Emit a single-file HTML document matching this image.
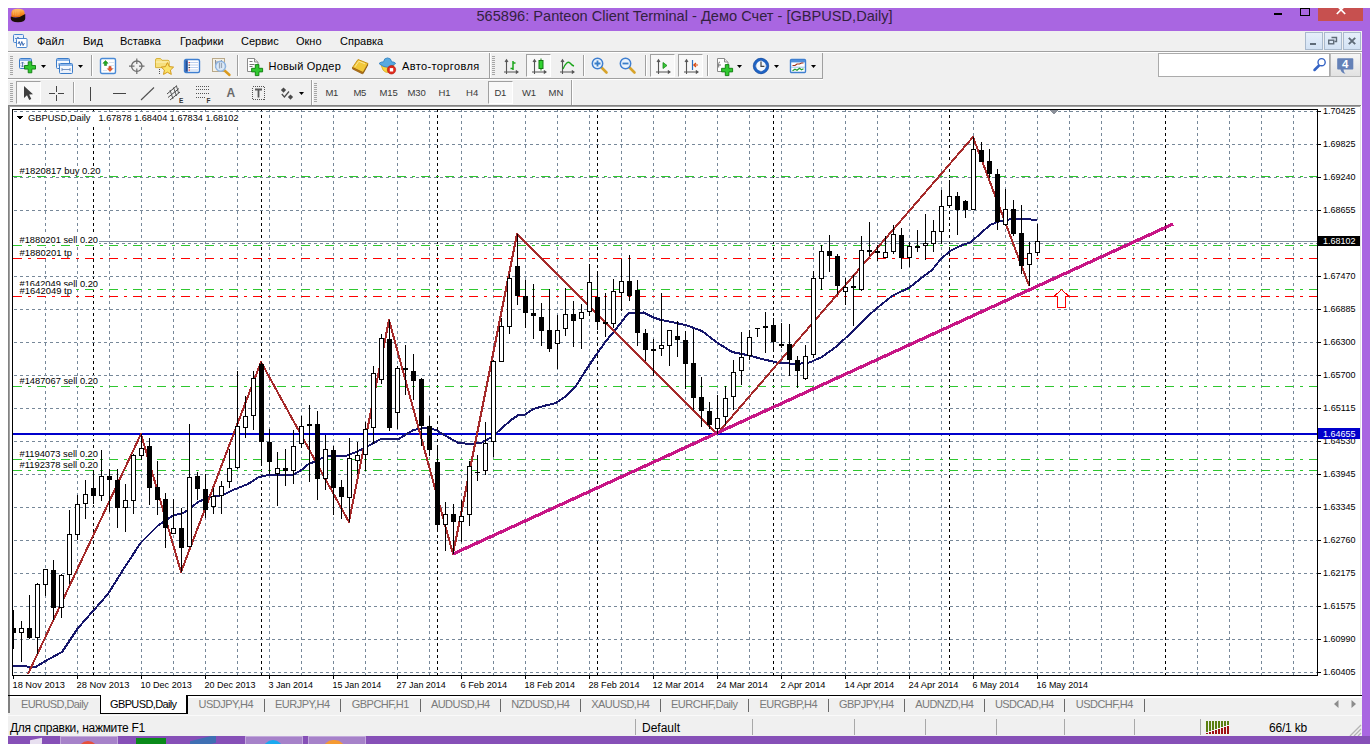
<!DOCTYPE html>
<html lang="ru">
<head>
<meta charset="utf-8">
<title>565896: Panteon Client Terminal - Демо Счет - [GBPUSD,Daily]</title>
<style>
html,body{margin:0;padding:0;background:#fff;}
body{width:1370px;height:744px;position:relative;overflow:hidden;font-family:"Liberation Sans",sans-serif;font-size:11px;color:#000;}
.abs{position:absolute;}
#win{position:absolute;left:8px;top:8px;width:1362px;height:728px;background:#a966e1;}
#title{position:absolute;left:0;top:0;width:1362px;height:23px;overflow:hidden;}
#title .cap{position:absolute;left:468.5px;top:-3px;font-size:14.6px;line-height:23px;color:#33213f;white-space:nowrap;letter-spacing:0px;}
#client{position:absolute;left:0;top:23px;width:1354px;height:705px;background:#f0f0f0;}
#menubar{position:absolute;left:0;top:0;width:1354px;height:20px;}
#menubar span{position:absolute;top:3px;line-height:14px;white-space:nowrap;}
.hline{position:absolute;height:1px;}
.vline{position:absolute;width:1px;}
.tbtxt{position:absolute;white-space:nowrap;}
.tf{position:absolute;top:62px;font-size:9.5px;line-height:12px;color:#3c3c3c;white-space:nowrap;}
.pressed{position:absolute;background:#f8f8f8;border:1px solid;border-color:#a0a0a0 #fff #fff #a0a0a0;box-sizing:border-box;}
svg{position:absolute;display:block;}
#tabs{position:absolute;left:0;top:664px;width:1354px;height:20px;}
#tabs span{position:absolute;top:3px;line-height:14px;color:#7a7a7a;white-space:nowrap;}
#tabs i{position:absolute;top:4px;width:1px;height:13px;background:#6a6a6a;}
#status{position:absolute;left:0;top:684px;width:1354px;height:21px;border-top:1px solid #fafafa;box-sizing:border-box;}
#status i{position:absolute;top:3px;width:1px;height:16px;background:#a8a8a8;}
#status span{position:absolute;top:2px;font-size:12px;line-height:16px;white-space:nowrap;}
#taskbar{position:absolute;left:8px;top:736px;width:1362px;height:8px;background:#8650b7;overflow:hidden;}
</style>
</head>
<body>
<div id="win">
 <div id="title">
  <svg style="left:2px;top:0px" width="16" height="15.5" viewBox="0 0 17 19" preserveAspectRatio="none"><defs><linearGradient id="go" x1="0" y1="0" x2="0" y2="1"><stop offset="0" stop-color="#ffc46a"/><stop offset="0.6" stop-color="#f58a1f"/><stop offset="1" stop-color="#e06a10"/></linearGradient></defs><path d="M1.5 11 v-5 q0 -5 7 -5 q7 0 7 5 v5 z" fill="url(#go)"/><path d="M0.8 10.5 q7.5 3.5 15.4 -3 v5.5 q0 4.5 -7.7 4.5 q-7.7 0 -7.7 -4.5 z" fill="#1a0e08"/><path d="M3.5 4 v5 M5.5 3 v6.5 M7.5 2.7 v7 M9.5 2.7 v6.5" stroke="#ffd9a0" stroke-width="0.7" opacity="0.7"/></svg>
  <div class="cap">565896: Panteon Client Terminal - Демо Счет - [GBPUSD,Daily]</div>
  <div class="abs" style="left:1266px;top:5px;width:8px;height:2px;background:#000"></div>
  <div class="abs" style="left:1292px;top:0px;width:8px;height:5.5px;border:1px solid #000"></div>
  <div class="abs" style="left:1310px;top:0;width:45px;height:13px;background:#c7504f"></div>
  <svg style="left:1328px;top:-3px" width="10" height="10" viewBox="0 0 10 10"><path d="M0.8 0.5 L9.2 9 M9.2 0.5 L0.8 9" stroke="#fff" stroke-width="1.7" fill="none"/></svg>
 </div>
 <div id="client">
  <div id="menubar">
   <svg style="left:4px;top:2px" width="17" height="16" viewBox="0 0 17 16" ><rect x="1.5" y="1.5" width="10" height="8" rx="1" fill="#e8f1fb" stroke="#4a86d0" stroke-width="1"/><path d="M3 5.5 h2 l1 -1.5 l1 2.5 l1 -1 h2" stroke="#3a70b8" stroke-width="0.8" fill="none"/><rect x="4.5" y="5.5" width="10.5" height="9" rx="1" fill="#fff" stroke="#4a86d0" stroke-width="1"/><path d="M6 11 l1.2 -2.5 l1.3 4 l1.3 -4 l1.3 4 l1.3 -2.5" stroke="#2a5fae" stroke-width="0.9" fill="none"/></svg>
   <span style="left:29px">Файл</span>
   <span style="left:75px">Вид</span>
   <span style="left:112px">Вставка</span>
   <span style="left:172px">Графики</span>
   <span style="left:233px">Сервис</span>
   <span style="left:288px">Окно</span>
   <span style="left:332px">Справка</span>
   <div class="abs" style="left:1297px;top:1px;width:18px;height:18px;background:linear-gradient(#e6effa,#d3e2f4);border:1px solid #a9b9cc;box-sizing:border-box"></div><svg style="left:1297px;top:1px" width="18" height="18" viewBox="0 0 18 18" ><rect x="5" y="11" width="6" height="2" fill="#5f6b78"/></svg><div class="abs" style="left:1316px;top:1px;width:18px;height:18px;background:linear-gradient(#e6effa,#d3e2f4);border:1px solid #a9b9cc;box-sizing:border-box"></div><svg style="left:1316px;top:1px" width="18" height="18" viewBox="0 0 18 18" ><path d="M7.5 5.5 h5 v4 h-2" stroke="#5f6b78" stroke-width="1.4" fill="none"/><rect x="4.7" y="8.2" width="5" height="3.6" stroke="#5f6b78" stroke-width="1.4" fill="none"/></svg><div class="abs" style="left:1335px;top:1px;width:18px;height:18px;background:linear-gradient(#e6effa,#d3e2f4);border:1px solid #a9b9cc;box-sizing:border-box"></div><svg style="left:1335px;top:1px" width="18" height="18" viewBox="0 0 18 18" ><path d="M5.8 5.8 l6.4 6.4 M12.2 5.8 l-6.4 6.4" stroke="#5f6b78" stroke-width="1.9"/></svg>
  </div>
  <!-- toolbar separators -->
  <div class="hline" style="left:0;top:20px;width:1354px;background:#a0a0a0"></div>
  <div class="hline" style="left:0;top:21px;width:1354px;background:#fff"></div>
  <div class="hline" style="left:0;top:47px;width:815px;background:#a0a0a0"></div>
  <div class="hline" style="left:0;top:48px;width:815px;background:#fff"></div>
  <div class="vline" style="left:814px;top:22px;height:26px;background:#a0a0a0"></div>
  <div class="vline" style="left:481px;top:22px;height:25px;background:#a0a0a0"></div>
  <div class="vline" style="left:482px;top:22px;height:25px;background:#fff"></div>
  <div class="vline" style="left:303px;top:49px;height:25px;background:#a0a0a0"></div>
  <div class="vline" style="left:304px;top:49px;height:25px;background:#fff"></div>
  <div class="vline" style="left:563px;top:49px;height:25px;background:#a0a0a0"></div>
  <div class="vline" style="left:564px;top:49px;height:25px;background:#fff"></div>
  <div class="abs" style="left:2px;top:25px;width:3px;height:19px;background:repeating-linear-gradient(to bottom,#a6a6a6 0,#a6a6a6 1px,transparent 1px,transparent 2px)"></div>
<svg style="left:10px;top:26px" width="20" height="18" viewBox="0 0 20 18" ><defs><linearGradient id="gw" x1="0" y1="0" x2="0" y2="1"><stop offset="0" stop-color="#fff"/><stop offset="1" stop-color="#e6eefa"/></linearGradient></defs><rect x="1.5" y="1.5" width="12" height="10" rx="1" fill="url(#gw)" stroke="#3b7cc9"/><rect x="2" y="2" width="11" height="2" fill="#8db6ea"/><path d="M4.5 5 v5 M3 6.5 l1.5 -1.5 l1.5 1.5 M3 8.5 l1.5 1.5 l1.5 -1.5" stroke="#5577aa" stroke-width="0.9" fill="none"/><path d="M10.2 4.8 h3.6 v3.7 h3.7 v3.6 h-3.7 v3.7 h-3.6 v-3.7 h-3.7 v-3.6 h3.7 z" fill="#30c830" stroke="#0d7a0d" stroke-width="0.9"/></svg>
<svg style="left:33px;top:34px" width="5" height="3" viewBox="0 0 5 3" ><path d="M0 0 H5 L2.5 3 Z" fill="#000"/></svg>
<svg style="left:47px;top:26px" width="20" height="18" viewBox="0 0 20 18" ><rect x="1.5" y="1.5" width="13" height="10" rx="1" fill="url(#gw)" stroke="#3b7cc9"/><rect x="2" y="2" width="12" height="2" fill="#8db6ea"/><path d="M4 7.5 h8 M4 6 v3 M12 6 v3" stroke="#6688bb" stroke-width="0.9" fill="none"/><rect x="4.5" y="6.5" width="13" height="10" rx="1" fill="url(#gw)" stroke="#3b7cc9"/><rect x="5" y="7" width="12" height="2" fill="#8db6ea"/><path d="M7 12.5 h8 M7 11 v3 M15 11 v3" stroke="#6688bb" stroke-width="0.9" fill="none"/></svg>
<svg style="left:70px;top:34px" width="5" height="3" viewBox="0 0 5 3" ><path d="M0 0 H5 L2.5 3 Z" fill="#000"/></svg>
<div class="vline" style="left:83px;top:24px;height:21px;background:#a0a0a0"></div><div class="vline" style="left:84px;top:24px;height:21px;background:#fff"></div>
<svg style="left:91px;top:26px" width="19" height="18" viewBox="0 0 19 18" ><rect x="1.5" y="1.5" width="15" height="15" rx="1.5" fill="#fff" stroke="#4a8ad6" stroke-width="1.4"/><path d="M10 5.5 h5 M10 8.5 h5 M10 11.5 h5 M4 13.5 h4" stroke="#d9e2ee" stroke-width="1"/><path d="M6.5 3.5 l2.6 2.8 h-1.5 v2.2 h-2.2 v-2.2 h-1.5 z" fill="#22aa22" stroke="#117711" stroke-width="0.5"/><path d="M11 14.5 l2.6 -2.8 h-1.5 v-2.2 h-2.2 v2.2 h-1.5 z" fill="#f05a28" stroke="#b03010" stroke-width="0.5"/></svg>
<svg style="left:120px;top:26px" width="18" height="18" viewBox="0 0 18 18" ><circle cx="8.8" cy="9.2" r="5.2" fill="none" stroke="#6d6d6d" stroke-width="1.3"/><path d="M8.8 1.5 v5.5 M8.8 11.5 v5.5 M1 9.2 h5.5 M11 9.2 h5.5" stroke="#6d6d6d" stroke-width="1.2"/></svg>
<svg style="left:146px;top:26px" width="21" height="19" viewBox="0 0 21 19" ><path d="M1.5 3 q0 -1.5 1.5 -1.5 h3.5 l1.5 1.8 h6 q1.2 0 1.2 1.3 v6 h-13.7 z" fill="#f6df7e" stroke="#d8b23a" stroke-width="1"/><path d="M1.8 5 h13" stroke="#fdf3c0" stroke-width="1"/><path d="M5.5 12 v6" stroke="#555" stroke-width="1" stroke-dasharray="1 1"/><path d="M13.4 5.6 l1.9 4 l4.3 .5 l-3.2 3 l.9 4.3 l-3.9 -2.2 l-3.9 2.2 l.9 -4.3 l-3.2 -3 l4.3 -.5 z" fill="#fbe36a" stroke="#d49a1c" stroke-width="1"/></svg>
<svg style="left:175px;top:27px" width="19" height="16" viewBox="0 0 19 16" ><rect x="1.5" y="1.5" width="15" height="13" rx="1.5" fill="#fff" stroke="#3f7fd0" stroke-width="1.4"/><rect x="2.2" y="2.2" width="2.6" height="11.6" fill="#1d4f9e"/><path d="M7 4.5 h8 M7 7 h8 M7 9.5 h8 M7 12 h8" stroke="#bcd0ee" stroke-width="1"/><rect x="5.6" y="4" width="1.2" height="1.2" fill="#e02020"/><rect x="5.6" y="6.5" width="1.2" height="1.2" fill="#222"/><rect x="5.6" y="9" width="1.2" height="1.2" fill="#222"/><rect x="5.6" y="11.5" width="1.2" height="1.2" fill="#e02020"/></svg>
<svg style="left:203px;top:26px" width="21" height="20" viewBox="0 0 21 20" ><rect x="1.5" y="1.5" width="12" height="13" fill="#f4f1e6" stroke="#b9a98a" stroke-width="1"/><path d="M4.5 3 v8 M10.5 3 v8 M4.5 5 h6" stroke="#8a8f98" stroke-width="1" fill="none"/><path d="M13 13 l5.5 5" stroke="#d99a1e" stroke-width="2.4" stroke-linecap="round"/><circle cx="9.6" cy="9.2" r="5" fill="#d6e8fa" fill-opacity="0.85" stroke="#8fb4e0" stroke-width="1.4"/><path d="M8.5 5.5 v6 M10.5 6 v5" stroke="#9aa6b5" stroke-width="1.2"/></svg>
<div class="vline" style="left:229px;top:24px;height:21px;background:#a0a0a0"></div><div class="vline" style="left:230px;top:24px;height:21px;background:#fff"></div>
<svg style="left:238px;top:26px" width="19" height="20" viewBox="0 0 19 20" ><path d="M1.5 1.5 h7 l3.5 3.5 v9.5 h-10.5 z" fill="#fff" stroke="#8a8a8a" stroke-width="1"/><path d="M8.5 1.5 v3.5 h3.5" fill="#e6e6e6" stroke="#8a8a8a" stroke-width="1"/><path d="M3.5 4.5 h3 M3.5 7.5 h5 M3.5 9.5 h3" stroke="#777" stroke-width="1"/><path d="M9.3 7.6 h3.6 v3.7 h3.7 v3.6 h-3.7 v3.7 h-3.6 v-3.7 h-3.7 v-3.6 h3.7 z" fill="#30c830" stroke="#0d7a0d" stroke-width="0.9"/></svg>
<span class="tbtxt" style="left:260.50px;top:28.19px;font-size:11px;line-height:14px;color:#000;letter-spacing:0.219px;">Новый Ордер</span>
<svg style="left:343px;top:27px" width="19" height="17" viewBox="0 0 19 17" ><path d="M1.5 9.5 L7 1.5 L17 5.5 L12 14.5 Z" fill="#f2c83a" stroke="#c8931a" stroke-width="1"/><path d="M1.5 9.5 L12 14.5 L11.5 16 L1.5 11 Z" fill="#b87414" stroke="#8a560c" stroke-width="0.6"/><path d="M12 14.5 L17 5.5 L17.2 7 L12.3 16 Z" fill="#8a560c"/><path d="M4 8.8 L7.8 3.3 L14 5.8" stroke="#fbe89a" stroke-width="1" fill="none"/></svg>
<svg style="left:370px;top:26px" width="19" height="18" viewBox="0 0 19 18" ><path d="M3 8 q6.5 5 13 0 l-2 5 q-4.5 5 -9 0 z" fill="#f7d544" stroke="#d6a91e" stroke-width="0.8"/><path d="M1 6.5 q2 -2 4.5 -1.6 q.5 -4 4 -4 q3.6 0 4.2 4 q2.6 -.4 4 1.6 q-4 3.6 -8.3 3.6 q-4.6 0 -8.4 -3.6 z" fill="#58a9df" stroke="#2f7fc0" stroke-width="0.8"/><circle cx="13.5" cy="12.8" r="4.2" fill="#e02a1c" stroke="#b01208" stroke-width="0.6"/><rect x="11.8" y="11.1" width="3.4" height="3.4" fill="#fff"/></svg>
<span class="tbtxt" style="left:394.00px;top:28.19px;font-size:11px;line-height:14px;color:#000;letter-spacing:0.374px;">Авто-торговля</span>
<div class="abs" style="left:484px;top:25px;width:3px;height:19px;background:repeating-linear-gradient(to bottom,#a6a6a6 0,#a6a6a6 1px,transparent 1px,transparent 2px)"></div>
<svg style="left:495px;top:27px" width="17" height="17" viewBox="0 0 17 17" ><path d="M3.5 2 v14 M1 14 h13.5 M2 4 l1.5 -2.2 l1.5 2.2 M12.8 12.5 l2.2 1.5 l-2.2 1.5" stroke="#555" stroke-width="1.1" fill="none"/><path d="M10 3 v9 M10 5 h2.5 M7.5 10.5 h2.5" stroke="#1aa51a" stroke-width="1.5" fill="none"/></svg>
<div class="pressed" style="left:518px;top:23px;width:25px;height:23px"></div>
<svg style="left:523px;top:27px" width="17" height="17" viewBox="0 0 17 17" ><path d="M3.5 2 v14 M1 14 h13.5 M2 4 l1.5 -2.2 l1.5 2.2 M12.8 12.5 l2.2 1.5 l-2.2 1.5" stroke="#555" stroke-width="1.1" fill="none"/><path d="M10 0.5 v12" stroke="#127a12" stroke-width="1"/><rect x="8" y="2.5" width="4" height="8" fill="#2fd22f" stroke="#127a12" stroke-width="1"/></svg>
<svg style="left:551px;top:27px" width="17" height="17" viewBox="0 0 17 17" ><path d="M3.5 2 v14 M1 14 h13.5 M2 4 l1.5 -2.2 l1.5 2.2 M12.8 12.5 l2.2 1.5 l-2.2 1.5" stroke="#555" stroke-width="1.1" fill="none"/><path d="M4 11 q4 -9 7 -6 q2 2.5 4 3" stroke="#1aa51a" stroke-width="1.3" fill="none"/></svg>
<div class="vline" style="left:575px;top:24px;height:21px;background:#a0a0a0"></div><div class="vline" style="left:576px;top:24px;height:21px;background:#fff"></div>
<svg style="left:583px;top:26px" width="18" height="18" viewBox="0 0 18 18" ><path d="M10.5 10.5 l5 5" stroke="#d7a32a" stroke-width="2.6" stroke-linecap="round"/><circle cx="6.5" cy="6.5" r="5.2" fill="#eaf3fc" stroke="#3f7fd0" stroke-width="1.5"/><path d="M3.5 6.5 h6 M6.5 3.5 v6" stroke="#3a7ec8" stroke-width="1.8"/></svg>
<svg style="left:611px;top:26px" width="18" height="18" viewBox="0 0 18 18" ><path d="M10.5 10.5 l5 5" stroke="#d7a32a" stroke-width="2.6" stroke-linecap="round"/><circle cx="6.5" cy="6.5" r="5.2" fill="#eaf3fc" stroke="#3f7fd0" stroke-width="1.5"/><path d="M3.5 6.5 h6" stroke="#3a7ec8" stroke-width="1.8"/></svg>
<div class="vline" style="left:637px;top:24px;height:21px;background:#a0a0a0"></div><div class="vline" style="left:638px;top:24px;height:21px;background:#fff"></div>
<div class="pressed" style="left:642px;top:23px;width:25px;height:23px"></div>
<svg style="left:647px;top:27px" width="17" height="17" viewBox="0 0 17 17" ><path d="M3.5 2 v14 M1 14 h13.5 M2 4 l1.5 -2.2 l1.5 2.2 M12.8 12.5 l2.2 1.5 l-2.2 1.5" stroke="#555" stroke-width="1.1" fill="none"/><path d="M8 4.5 l4 3 l-4 3 z" fill="#39c839" stroke="#168a16" stroke-width="0.8"/></svg>
<div class="pressed" style="left:670px;top:23px;width:25px;height:23px"></div>
<svg style="left:675px;top:27px" width="17" height="17" viewBox="0 0 17 17" ><path d="M3.5 2 v14 M1 14 h13.5 M2 4 l1.5 -2.2 l1.5 2.2 M12.8 12.5 l2.2 1.5 l-2.2 1.5" stroke="#555" stroke-width="1.1" fill="none"/><path d="M9.5 2 v10" stroke="#2a6fc0" stroke-width="1.2"/><path d="M15 7 h-4 M13 5 l-2.2 2 l2.2 2" stroke="#d84a10" stroke-width="1.2" fill="none"/></svg>
<div class="vline" style="left:699px;top:24px;height:21px;background:#a0a0a0"></div><div class="vline" style="left:700px;top:24px;height:21px;background:#fff"></div>
<svg style="left:708px;top:26px" width="19" height="20" viewBox="0 0 19 20" ><path d="M1.5 1.5 h7 l3.5 3.5 v9.5 h-10.5 z" fill="#fff" stroke="#8a8a8a" stroke-width="1"/><path d="M8.5 1.5 v3.5 h3.5" fill="#e6e6e6" stroke="#8a8a8a" stroke-width="1"/><path d="M4 5 q-1.3 0 -1.3 1.5 v4" stroke="#777" stroke-width="1" fill="none"/><path d="M2 8 h3" stroke="#777" stroke-width="1"/><path d="M9.3 7.6 h3.6 v3.7 h3.7 v3.6 h-3.7 v3.7 h-3.6 v-3.7 h-3.7 v-3.6 h3.7 z" fill="#30c830" stroke="#0d7a0d" stroke-width="0.9"/></svg>
<svg style="left:729px;top:34px" width="5" height="3" viewBox="0 0 5 3" ><path d="M0 0 H5 L2.5 3 Z" fill="#000"/></svg>
<svg style="left:744px;top:26px" width="18" height="18" viewBox="0 0 18 18" ><circle cx="9" cy="9" r="6.4" fill="#f4f8fd" stroke="#1f63c4" stroke-width="3"/><circle cx="9" cy="9" r="7.8" fill="none" stroke="#0c3f8f" stroke-width="0.5"/><path d="M9 4.5 v4.8 h3.4" stroke="#444" stroke-width="1.2" fill="none"/><path d="M9 3 v1 M9 14 v1 M3 9 h1 M14 9 h1" stroke="#99a" stroke-width="1"/></svg>
<svg style="left:766px;top:34px" width="5" height="3" viewBox="0 0 5 3" ><path d="M0 0 H5 L2.5 3 Z" fill="#000"/></svg>
<svg style="left:781px;top:27px" width="19" height="16" viewBox="0 0 19 16" ><rect x="1.5" y="1.5" width="15" height="13" rx="1" fill="#fff" stroke="#3f7fd0" stroke-width="1.4"/><rect x="2" y="2" width="14" height="2.4" fill="#4f8fdc"/><path d="M2 9.2 h14" stroke="#9fc0ea" stroke-width="1"/><path d="M3.5 7.5 h2.5 l2 -1.5 h2.5 l2 -1 h2" stroke="#a03018" stroke-width="1.2" fill="none"/><path d="M3.5 12.8 l2.5 -1.5 l2 1 l2.5 -2 l2 1.5 l2 -1" stroke="#1f9a2f" stroke-width="1.2" fill="none"/></svg>
<svg style="left:803px;top:34px" width="5" height="3" viewBox="0 0 5 3" ><path d="M0 0 H5 L2.5 3 Z" fill="#000"/></svg>
<div class="abs" style="left:1150px;top:22px;width:172px;height:24px;background:#fff;border:1px solid #ababab;box-sizing:border-box"></div>
<svg style="left:1304px;top:26px" width="14" height="15" viewBox="0 0 14 15" ><path d="M7 8.5 l-4.5 4.5" stroke="#3563c4" stroke-width="2.5" stroke-linecap="round"/><circle cx="9.6" cy="5.2" r="3.6" fill="#fff" stroke="#3563c4" stroke-width="1.4"/></svg>
<div class="abs" style="left:1322px;top:22px;width:31px;height:24px;background:linear-gradient(#f6f6f6,#e2e2e2);border:1px solid #b9b9b9;box-sizing:border-box"></div>
<svg style="left:1329px;top:27px" width="17" height="16" viewBox="0 0 17 16" ><path d="M1 0.2 h14.5 q.8 0 .8 .8 v9.7 q0 .8 -.8 .8 h-9 q0 3 2 4.2 q-4.5 -.6 -5 -4.2 h-2.5 q-.8 0 -.8 -.8 v-9.7 q0 -.8 .8 -.8 z" fill="#6481b7"/><text x="8.2" y="10" text-anchor="middle" font-family="Liberation Sans, sans-serif" font-weight="bold" font-size="11.5" fill="#fff" shape-rendering="auto">4</text></svg>
  <div class="abs" style="left:2px;top:52px;width:3px;height:19px;background:repeating-linear-gradient(to bottom,#a6a6a6 0,#a6a6a6 1px,transparent 1px,transparent 2px)"></div>
<div class="pressed" style="left:8px;top:50px;width:25px;height:23px"></div>
<svg style="left:15px;top:54px" width="11" height="16" viewBox="0 0 11 16" ><path d="M1 1 L1 13 L4 10.2 L6.2 15 L8.3 14 L6.2 9.5 L10 9.2 Z" fill="#3f3f3f"/></svg>
<svg style="left:40px;top:54px" width="17" height="17" viewBox="0 0 17 17" ><path d="M8.5 1 v6 M8.5 10 v6 M1 8.5 h6 M10 8.5 h6" stroke="#454545" stroke-width="1" shape-rendering="crispEdges"/></svg>
<div class="vline" style="left:65px;top:51px;height:21px;background:#a0a0a0"></div><div class="vline" style="left:66px;top:51px;height:21px;background:#fff"></div>
<svg style="left:82px;top:56px" width="1" height="14" viewBox="0 0 1 14" ><rect width="1" height="14" fill="#454545"/></svg>
<svg style="left:105px;top:62px" width="13" height="1" viewBox="0 0 13 1" ><rect width="13" height="1" fill="#454545"/></svg>
<svg style="left:132px;top:55px" width="15" height="15" viewBox="0 0 15 15" ><path d="M1 14 L14 1.5" stroke="#505050" stroke-width="1.1"/></svg>
<svg style="left:158px;top:53px" width="18" height="19" viewBox="0 0 18 19" ><path d="M1 10 L11 1.5 M2 13.5 L13 4.5 M4 16 L14 8" stroke="#4a4a4a" stroke-width="1"/><path d="M4 6 L7 15 M7.5 3.5 L10.5 12 M10.5 2 L12.5 9" stroke="#4a4a4a" stroke-width="0.9"/><text x="13" y="18.5" font-family="Liberation Sans, sans-serif" font-weight="bold" font-size="6.5" fill="#333">E</text></svg>
<svg style="left:187px;top:54px" width="17" height="18" viewBox="0 0 17 18" ><path d="M1 1.5 h13 M1 4 h13 M1 8 h13 M1 12.5 h10" stroke="#555" stroke-width="1" stroke-dasharray="1 1" shape-rendering="crispEdges"/><text x="11.5" y="17.5" font-family="Liberation Sans, sans-serif" font-weight="bold" font-size="6.5" fill="#333">F</text></svg>
<span class="tbtxt" style="left:218.50px;top:55.34px;font-size:12px;line-height:15px;color:#6a6a6a;font-weight:bold;letter-spacing:-0.466px;">A</span>
<svg style="left:243px;top:54px" width="16" height="16" viewBox="0 0 16 16" ><rect x="1.5" y="1.5" width="12" height="13" fill="none" stroke="#555" stroke-width="1" stroke-dasharray="1 1" shape-rendering="crispEdges"/><path d="M4 4.5 h7 M7.5 4.5 v8" stroke="#5a5a5a" stroke-width="1.8"/></svg>
<svg style="left:271px;top:55px" width="16" height="16" viewBox="0 0 16 16" ><path d="M4.5 1.5 l2.6 2.6 l-2.6 2.6 l-2.6 -2.6 z" fill="#4a4a4a"/><path d="M11.5 8.5 l2.6 2.6 l-2.6 2.6 l-2.6 -2.6 z" fill="#4a4a4a"/><path d="M2.8 8 l2.6 3 l4.6 -5.5" stroke="#4a4a4a" stroke-width="1.2" fill="none"/></svg>
<svg style="left:291px;top:61px" width="5" height="3" viewBox="0 0 5 3" ><path d="M0 0 H5 L2.5 3 Z" fill="#000"/></svg>
<div class="abs" style="left:306px;top:52px;width:3px;height:19px;background:repeating-linear-gradient(to bottom,#a6a6a6 0,#a6a6a6 1px,transparent 1px,transparent 2px)"></div>
<span class="tbtxt" style="left:317.50px;top:56.46px;font-size:9.5px;line-height:12.5px;color:#3a3a3a;letter-spacing:-0.349px;">M1</span>
<span class="tbtxt" style="left:345.50px;top:56.46px;font-size:9.5px;line-height:12.5px;color:#3a3a3a;letter-spacing:-0.349px;">M5</span>
<span class="tbtxt" style="left:371.50px;top:56.46px;font-size:9.5px;line-height:12.5px;color:#3a3a3a;letter-spacing:-0.160px;">M15</span>
<span class="tbtxt" style="left:399.50px;top:56.46px;font-size:9.5px;line-height:12.5px;color:#3a3a3a;letter-spacing:-0.160px;">M30</span>
<span class="tbtxt" style="left:430.50px;top:56.46px;font-size:9.5px;line-height:12.5px;color:#3a3a3a;letter-spacing:-0.072px;">H1</span>
<span class="tbtxt" style="left:458.00px;top:56.46px;font-size:9.5px;line-height:12.5px;color:#3a3a3a;letter-spacing:0.178px;">H4</span>
<div class="pressed" style="left:480px;top:50px;width:25px;height:23px"></div>
<span class="tbtxt" style="left:486.50px;top:56.46px;font-size:9.5px;line-height:12.5px;color:#3a3a3a;letter-spacing:-0.322px;">D1</span>
<span class="tbtxt" style="left:514.00px;top:56.46px;font-size:9.5px;line-height:12.5px;color:#3a3a3a;letter-spacing:-0.125px;">W1</span>
<span class="tbtxt" style="left:540.50px;top:56.46px;font-size:9.5px;line-height:12.5px;color:#3a3a3a;letter-spacing:0.113px;">MN</span>
  <!-- chart frame -->
  <div class="abs" style="left:0;top:74px;width:1354px;height:590px;background:#fff;"></div>
  <div class="hline" style="left:0;top:74px;width:1354px;background:#828282"></div>
  <div class="hline" style="left:0;top:75px;width:1354px;background:#a0a0a0"></div>
  <div class="vline" style="left:0;top:74px;height:590px;background:#828282"></div>
  <div class="vline" style="left:1px;top:75px;height:589px;background:#a0a0a0"></div>
  <div class="vline" style="left:1352px;top:75px;height:589px;background:#e3e3e3"></div>
  <div class="vline" style="left:1353px;top:74px;height:590px;background:#fff"></div>
  <svg class="chart" style="left:0px;top:74px" width="1354" height="590" viewBox="8 105 1354 590" shape-rendering="crispEdges">
<line x1="45.5" y1="109" x2="45.5" y2="675" stroke="#778899" stroke-dasharray="3 3"/>
<line x1="77.5" y1="109" x2="77.5" y2="675" stroke="#778899" stroke-dasharray="3 3"/>
<line x1="109.5" y1="109" x2="109.5" y2="675" stroke="#778899" stroke-dasharray="3 3"/>
<line x1="141.5" y1="109" x2="141.5" y2="675" stroke="#778899" stroke-dasharray="3 3"/>
<line x1="173.5" y1="109" x2="173.5" y2="675" stroke="#778899" stroke-dasharray="3 3"/>
<line x1="205.5" y1="109" x2="205.5" y2="675" stroke="#778899" stroke-dasharray="3 3"/>
<line x1="237.5" y1="109" x2="237.5" y2="675" stroke="#778899" stroke-dasharray="3 3"/>
<line x1="269.5" y1="109" x2="269.5" y2="675" stroke="#778899" stroke-dasharray="3 3"/>
<line x1="301.5" y1="109" x2="301.5" y2="675" stroke="#778899" stroke-dasharray="3 3"/>
<line x1="333.5" y1="109" x2="333.5" y2="675" stroke="#778899" stroke-dasharray="3 3"/>
<line x1="365.5" y1="109" x2="365.5" y2="675" stroke="#778899" stroke-dasharray="3 3"/>
<line x1="397.5" y1="109" x2="397.5" y2="675" stroke="#778899" stroke-dasharray="3 3"/>
<line x1="429.5" y1="109" x2="429.5" y2="675" stroke="#778899" stroke-dasharray="3 3"/>
<line x1="461.5" y1="109" x2="461.5" y2="675" stroke="#778899" stroke-dasharray="3 3"/>
<line x1="493.5" y1="109" x2="493.5" y2="675" stroke="#778899" stroke-dasharray="3 3"/>
<line x1="525.5" y1="109" x2="525.5" y2="675" stroke="#778899" stroke-dasharray="3 3"/>
<line x1="557.5" y1="109" x2="557.5" y2="675" stroke="#778899" stroke-dasharray="3 3"/>
<line x1="589.5" y1="109" x2="589.5" y2="675" stroke="#778899" stroke-dasharray="3 3"/>
<line x1="621.5" y1="109" x2="621.5" y2="675" stroke="#778899" stroke-dasharray="3 3"/>
<line x1="653.5" y1="109" x2="653.5" y2="675" stroke="#778899" stroke-dasharray="3 3"/>
<line x1="685.5" y1="109" x2="685.5" y2="675" stroke="#778899" stroke-dasharray="3 3"/>
<line x1="717.5" y1="109" x2="717.5" y2="675" stroke="#778899" stroke-dasharray="3 3"/>
<line x1="749.5" y1="109" x2="749.5" y2="675" stroke="#778899" stroke-dasharray="3 3"/>
<line x1="781.5" y1="109" x2="781.5" y2="675" stroke="#778899" stroke-dasharray="3 3"/>
<line x1="813.5" y1="109" x2="813.5" y2="675" stroke="#778899" stroke-dasharray="3 3"/>
<line x1="845.5" y1="109" x2="845.5" y2="675" stroke="#778899" stroke-dasharray="3 3"/>
<line x1="877.5" y1="109" x2="877.5" y2="675" stroke="#778899" stroke-dasharray="3 3"/>
<line x1="909.5" y1="109" x2="909.5" y2="675" stroke="#778899" stroke-dasharray="3 3"/>
<line x1="941.5" y1="109" x2="941.5" y2="675" stroke="#778899" stroke-dasharray="3 3"/>
<line x1="973.5" y1="109" x2="973.5" y2="675" stroke="#778899" stroke-dasharray="3 3"/>
<line x1="1005.5" y1="109" x2="1005.5" y2="675" stroke="#778899" stroke-dasharray="3 3"/>
<line x1="1037.5" y1="109" x2="1037.5" y2="675" stroke="#778899" stroke-dasharray="3 3"/>
<line x1="1069.5" y1="109" x2="1069.5" y2="675" stroke="#778899" stroke-dasharray="3 3"/>
<line x1="1101.5" y1="109" x2="1101.5" y2="675" stroke="#778899" stroke-dasharray="3 3"/>
<line x1="1133.5" y1="109" x2="1133.5" y2="675" stroke="#778899" stroke-dasharray="3 3"/>
<line x1="1165.5" y1="109" x2="1165.5" y2="675" stroke="#778899" stroke-dasharray="3 3"/>
<line x1="1197.5" y1="109" x2="1197.5" y2="675" stroke="#778899" stroke-dasharray="3 3"/>
<line x1="1229.5" y1="109" x2="1229.5" y2="675" stroke="#778899" stroke-dasharray="3 3"/>
<line x1="1261.5" y1="109" x2="1261.5" y2="675" stroke="#778899" stroke-dasharray="3 3"/>
<line x1="1293.5" y1="109" x2="1293.5" y2="675" stroke="#778899" stroke-dasharray="3 3"/>
<line x1="93.5" y1="109" x2="93.5" y2="675" stroke="#000" stroke-dasharray="3 3"/>
<line x1="261.5" y1="109" x2="261.5" y2="675" stroke="#000" stroke-dasharray="3 3"/>
<line x1="437.5" y1="109" x2="437.5" y2="675" stroke="#000" stroke-dasharray="3 3"/>
<line x1="597.5" y1="109" x2="597.5" y2="675" stroke="#000" stroke-dasharray="3 3"/>
<line x1="773.5" y1="109" x2="773.5" y2="675" stroke="#000" stroke-dasharray="3 3"/>
<line x1="949.5" y1="109" x2="949.5" y2="675" stroke="#000" stroke-dasharray="3 3"/>
<line x1="1165.5" y1="109" x2="1165.5" y2="675" stroke="#000" stroke-dasharray="3 3"/>
<line x1="14" y1="111.5" x2="1317" y2="111.5" stroke="#778899" stroke-dasharray="3 3"/>
<line x1="14" y1="144.5" x2="1317" y2="144.5" stroke="#778899" stroke-dasharray="3 3"/>
<line x1="14" y1="177.5" x2="1317" y2="177.5" stroke="#778899" stroke-dasharray="3 3"/>
<line x1="14" y1="210.5" x2="1317" y2="210.5" stroke="#778899" stroke-dasharray="3 3"/>
<line x1="14" y1="243.5" x2="1317" y2="243.5" stroke="#778899" stroke-dasharray="3 3"/>
<line x1="14" y1="276.5" x2="1317" y2="276.5" stroke="#778899" stroke-dasharray="3 3"/>
<line x1="14" y1="309.5" x2="1317" y2="309.5" stroke="#778899" stroke-dasharray="3 3"/>
<line x1="14" y1="342.5" x2="1317" y2="342.5" stroke="#778899" stroke-dasharray="3 3"/>
<line x1="14" y1="375.5" x2="1317" y2="375.5" stroke="#778899" stroke-dasharray="3 3"/>
<line x1="14" y1="408.5" x2="1317" y2="408.5" stroke="#778899" stroke-dasharray="3 3"/>
<line x1="14" y1="441.5" x2="1317" y2="441.5" stroke="#778899" stroke-dasharray="3 3"/>
<line x1="14" y1="474.5" x2="1317" y2="474.5" stroke="#778899" stroke-dasharray="3 3"/>
<line x1="14" y1="507.5" x2="1317" y2="507.5" stroke="#778899" stroke-dasharray="3 3"/>
<line x1="14" y1="540.5" x2="1317" y2="540.5" stroke="#778899" stroke-dasharray="3 3"/>
<line x1="14" y1="573.5" x2="1317" y2="573.5" stroke="#778899" stroke-dasharray="3 3"/>
<line x1="14" y1="606.5" x2="1317" y2="606.5" stroke="#778899" stroke-dasharray="3 3"/>
<line x1="14" y1="639.5" x2="1317" y2="639.5" stroke="#778899" stroke-dasharray="3 3"/>
<line x1="14" y1="672.5" x2="1317" y2="672.5" stroke="#778899" stroke-dasharray="3 3"/>
<line x1="13" y1="241.5" x2="1317" y2="241.5" stroke="#8492a2"/>
<line x1="13" y1="176.5" x2="1317" y2="176.5" stroke="#2fc72f" stroke-dasharray="9 6 3 6" stroke-dashoffset="0"/>
<line x1="13" y1="245.5" x2="1317" y2="245.5" stroke="#2fc72f" stroke-dasharray="9 6 3 6" stroke-dashoffset="0"/>
<line x1="13" y1="289.5" x2="1317" y2="289.5" stroke="#2fc72f" stroke-dasharray="9 6 3 6" stroke-dashoffset="0"/>
<line x1="13" y1="386.5" x2="1317" y2="386.5" stroke="#2fc72f" stroke-dasharray="9 6 3 6" stroke-dashoffset="0"/>
<line x1="13" y1="459.5" x2="1317" y2="459.5" stroke="#2fc72f" stroke-dasharray="9 6 3 6" stroke-dashoffset="0"/>
<line x1="13" y1="470.5" x2="1317" y2="470.5" stroke="#2fc72f" stroke-dasharray="9 6 3 6" stroke-dashoffset="0"/>
<line x1="13" y1="258.5" x2="1317" y2="258.5" stroke="#ff0000" stroke-dasharray="9 6 3 6" stroke-dashoffset="0"/>
<line x1="13" y1="296.5" x2="1317" y2="296.5" stroke="#ff0000" stroke-dasharray="9 6 3 6" stroke-dashoffset="0"/>
<rect x="13" y="433" width="1304" height="2" fill="#0000cc"/>
<polyline fill="none" stroke="#16166b" stroke-width="2" stroke-linejoin="round" points="13,665.7 35.5,667 45.5,661 62,652 78,628 93,611 108,594 123,570 140.5,543 158,525.5 173,515.5 183,513 188,510 198,502 208,497.5 223,495 233,490 248,484 258,477.5 268,475 283,475.5 293,475 303,469 308,464.5 316,461 324,457 327,456.5 346,456 356,452 364.5,448 381,439 398.5,439 413.5,430 426,427.5 436,430 446,436 458.5,443 471,444 481,443 491,437.5 501,429 511,420 518.5,415 525,414.5 533.5,409 543.5,406 556,403 566,396 576,386 586,370 596,355 606,341 616,329 628.5,313 643.5,312.5 653.5,317.5 661,320 672,322 687,325.5 702,331 717,342.5 732,352 747,355 762,359 777,362.5 797,364 809.5,362.5 822,357 837,346 852,332 867,317 877,308 892,296 909.5,287.5 922,277.5 932,270 940,260 950,251 960,246 970,242.5 980,234 990,225 1000,221 1012.5,219 1025,219 1037,220"/>
<polyline fill="none" stroke="#a52a2a" stroke-width="2" stroke-linejoin="round" points="28,674 141,434 181,572 261,362 349,522 389,320 453,554 517,234 717,434 973,137 1029,285.5"/>
<line x1="453" y1="554" x2="1173" y2="224" stroke="#c71585" stroke-width="3.2"/>
<rect x="13" y="610" width="1" height="39" fill="#000"/>
<rect x="13" y="628" width="3" height="5" fill="#000"/>
<rect x="21" y="621" width="1" height="41" fill="#000"/>
<rect x="19.5" y="628.5" width="4" height="4" fill="#fff" stroke="#000"/>
<rect x="29" y="595" width="1" height="44" fill="#000"/>
<rect x="27" y="628" width="5" height="10" fill="#000"/>
<rect x="37" y="583" width="1" height="71" fill="#000"/>
<rect x="35.5" y="584.5" width="4" height="53" fill="#fff" stroke="#000"/>
<rect x="45" y="569" width="1" height="27" fill="#000"/>
<rect x="43.5" y="569.5" width="4" height="15" fill="#fff" stroke="#000"/>
<rect x="53" y="560" width="1" height="60" fill="#000"/>
<rect x="51" y="570" width="5" height="38" fill="#000"/>
<rect x="61" y="574" width="1" height="44" fill="#000"/>
<rect x="59.5" y="575.5" width="4" height="32" fill="#fff" stroke="#000"/>
<rect x="69" y="510" width="1" height="74" fill="#000"/>
<rect x="67.5" y="534.5" width="4" height="40" fill="#fff" stroke="#000"/>
<rect x="77" y="495" width="1" height="45" fill="#000"/>
<rect x="75.5" y="504.5" width="4" height="30" fill="#fff" stroke="#000"/>
<rect x="85" y="480" width="1" height="39" fill="#000"/>
<rect x="83.5" y="494.5" width="4" height="9" fill="#fff" stroke="#000"/>
<rect x="93" y="455" width="1" height="49" fill="#000"/>
<rect x="91" y="488" width="5" height="8" fill="#000"/>
<rect x="101" y="450" width="1" height="51" fill="#000"/>
<rect x="99.5" y="476.5" width="4" height="19" fill="#fff" stroke="#000"/>
<rect x="109" y="469" width="1" height="43" fill="#000"/>
<rect x="107" y="476" width="5" height="4" fill="#000"/>
<rect x="117" y="469" width="1" height="59" fill="#000"/>
<rect x="115" y="480" width="5" height="28" fill="#000"/>
<rect x="125" y="484" width="1" height="48" fill="#000"/>
<rect x="123.5" y="500.5" width="4" height="7" fill="#fff" stroke="#000"/>
<rect x="133" y="454" width="1" height="60" fill="#000"/>
<rect x="131.5" y="455.5" width="4" height="45" fill="#fff" stroke="#000"/>
<rect x="141" y="434" width="1" height="26" fill="#000"/>
<rect x="139.5" y="448.5" width="4" height="7" fill="#fff" stroke="#000"/>
<rect x="149" y="438" width="1" height="67" fill="#000"/>
<rect x="147" y="446" width="5" height="42" fill="#000"/>
<rect x="157" y="461" width="1" height="54" fill="#000"/>
<rect x="155" y="487" width="5" height="13" fill="#000"/>
<rect x="165" y="493" width="1" height="55" fill="#000"/>
<rect x="163" y="499" width="5" height="29" fill="#000"/>
<rect x="173" y="499" width="1" height="35" fill="#000"/>
<rect x="171.5" y="528.5" width="4" height="5" fill="#fff" stroke="#000"/>
<rect x="181" y="508" width="1" height="64" fill="#000"/>
<rect x="179" y="528" width="5" height="20" fill="#000"/>
<rect x="189" y="424" width="1" height="123" fill="#000"/>
<rect x="187.5" y="477.5" width="4" height="69" fill="#fff" stroke="#000"/>
<rect x="197" y="472" width="1" height="28" fill="#000"/>
<rect x="195" y="476" width="5" height="13" fill="#000"/>
<rect x="205" y="474" width="1" height="44" fill="#000"/>
<rect x="203" y="489" width="5" height="21" fill="#000"/>
<rect x="213" y="488" width="1" height="26" fill="#000"/>
<rect x="211.5" y="496.5" width="4" height="10" fill="#fff" stroke="#000"/>
<rect x="221" y="481" width="1" height="33" fill="#000"/>
<rect x="219.5" y="486.5" width="4" height="9" fill="#fff" stroke="#000"/>
<rect x="229" y="449" width="1" height="39" fill="#000"/>
<rect x="227.5" y="468.5" width="4" height="13" fill="#fff" stroke="#000"/>
<rect x="237" y="371" width="1" height="98" fill="#000"/>
<rect x="235.5" y="426.5" width="4" height="41" fill="#fff" stroke="#000"/>
<rect x="245" y="396" width="1" height="42" fill="#000"/>
<rect x="243.5" y="416.5" width="4" height="11" fill="#fff" stroke="#000"/>
<rect x="253" y="371" width="1" height="59" fill="#000"/>
<rect x="251.5" y="378.5" width="4" height="37" fill="#fff" stroke="#000"/>
<rect x="261" y="362" width="1" height="103" fill="#000"/>
<rect x="259" y="364" width="5" height="78" fill="#000"/>
<rect x="269" y="429" width="1" height="45" fill="#000"/>
<rect x="267" y="442" width="5" height="20" fill="#000"/>
<rect x="277" y="452" width="1" height="54" fill="#000"/>
<rect x="275.5" y="468.5" width="4" height="5" fill="#fff" stroke="#000"/>
<rect x="285" y="449" width="1" height="37" fill="#000"/>
<rect x="283" y="468" width="5" height="3" fill="#000"/>
<rect x="293" y="430" width="1" height="54" fill="#000"/>
<rect x="291.5" y="446.5" width="4" height="24" fill="#fff" stroke="#000"/>
<rect x="301" y="416" width="1" height="32" fill="#000"/>
<rect x="299.5" y="426.5" width="4" height="17" fill="#fff" stroke="#000"/>
<rect x="309" y="405" width="1" height="77" fill="#000"/>
<rect x="307" y="424" width="5" height="2" fill="#000"/>
<rect x="317" y="411" width="1" height="89" fill="#000"/>
<rect x="315" y="424" width="5" height="55" fill="#000"/>
<rect x="325" y="435" width="1" height="55" fill="#000"/>
<rect x="323.5" y="449.5" width="4" height="29" fill="#fff" stroke="#000"/>
<rect x="333" y="446" width="1" height="69" fill="#000"/>
<rect x="331" y="450" width="5" height="38" fill="#000"/>
<rect x="341" y="480" width="1" height="39" fill="#000"/>
<rect x="339" y="487" width="5" height="10" fill="#000"/>
<rect x="349" y="438" width="1" height="84" fill="#000"/>
<rect x="347.5" y="458.5" width="4" height="39" fill="#fff" stroke="#000"/>
<rect x="357" y="442" width="1" height="32" fill="#000"/>
<rect x="355.5" y="455.5" width="4" height="5" fill="#fff" stroke="#000"/>
<rect x="365" y="422" width="1" height="49" fill="#000"/>
<rect x="363.5" y="429.5" width="4" height="25" fill="#fff" stroke="#000"/>
<rect x="373" y="366" width="1" height="78" fill="#000"/>
<rect x="371.5" y="373.5" width="4" height="54" fill="#fff" stroke="#000"/>
<rect x="381" y="334" width="1" height="50" fill="#000"/>
<rect x="379.5" y="338.5" width="4" height="41" fill="#fff" stroke="#000"/>
<rect x="389" y="320" width="1" height="111" fill="#000"/>
<rect x="387" y="339" width="5" height="89" fill="#000"/>
<rect x="397" y="366" width="1" height="63" fill="#000"/>
<rect x="395.5" y="368.5" width="4" height="44" fill="#fff" stroke="#000"/>
<rect x="405" y="345" width="1" height="50" fill="#000"/>
<rect x="403" y="368" width="5" height="2" fill="#000"/>
<rect x="413" y="354" width="1" height="46" fill="#000"/>
<rect x="411" y="371" width="5" height="10" fill="#000"/>
<rect x="421" y="378" width="1" height="68" fill="#000"/>
<rect x="419" y="379" width="5" height="47" fill="#000"/>
<rect x="429" y="416" width="1" height="40" fill="#000"/>
<rect x="427" y="426" width="5" height="24" fill="#000"/>
<rect x="437" y="446" width="1" height="86" fill="#000"/>
<rect x="435" y="462" width="5" height="63" fill="#000"/>
<rect x="445" y="502" width="1" height="49" fill="#000"/>
<rect x="443.5" y="514.5" width="4" height="10" fill="#fff" stroke="#000"/>
<rect x="453" y="504" width="1" height="50" fill="#000"/>
<rect x="451" y="514" width="5" height="8" fill="#000"/>
<rect x="461" y="500" width="1" height="42" fill="#000"/>
<rect x="459.5" y="516.5" width="4" height="5" fill="#fff" stroke="#000"/>
<rect x="469" y="461" width="1" height="65" fill="#000"/>
<rect x="467.5" y="466.5" width="4" height="48" fill="#fff" stroke="#000"/>
<rect x="477" y="455" width="1" height="26" fill="#000"/>
<rect x="475" y="472" width="5" height="1" fill="#000"/>
<rect x="485" y="422" width="1" height="53" fill="#000"/>
<rect x="483.5" y="443.5" width="4" height="27" fill="#fff" stroke="#000"/>
<rect x="493" y="360" width="1" height="97" fill="#000"/>
<rect x="491.5" y="361.5" width="4" height="80" fill="#fff" stroke="#000"/>
<rect x="501" y="318" width="1" height="44" fill="#000"/>
<rect x="499.5" y="326.5" width="4" height="35" fill="#fff" stroke="#000"/>
<rect x="509" y="274" width="1" height="60" fill="#000"/>
<rect x="507.5" y="278.5" width="4" height="48" fill="#fff" stroke="#000"/>
<rect x="517" y="234" width="1" height="71" fill="#000"/>
<rect x="515" y="266" width="5" height="30" fill="#000"/>
<rect x="525" y="280" width="1" height="48" fill="#000"/>
<rect x="523" y="296" width="5" height="17" fill="#000"/>
<rect x="533" y="284" width="1" height="55" fill="#000"/>
<rect x="531" y="313" width="5" height="3" fill="#000"/>
<rect x="541" y="303" width="1" height="43" fill="#000"/>
<rect x="539" y="317" width="5" height="14" fill="#000"/>
<rect x="549" y="289" width="1" height="63" fill="#000"/>
<rect x="547" y="330" width="5" height="19" fill="#000"/>
<rect x="557" y="315" width="1" height="54" fill="#000"/>
<rect x="555.5" y="330.5" width="4" height="13" fill="#fff" stroke="#000"/>
<rect x="565" y="288" width="1" height="48" fill="#000"/>
<rect x="563.5" y="314.5" width="4" height="14" fill="#fff" stroke="#000"/>
<rect x="573" y="301" width="1" height="46" fill="#000"/>
<rect x="571" y="314" width="5" height="7" fill="#000"/>
<rect x="581" y="304" width="1" height="45" fill="#000"/>
<rect x="579.5" y="312.5" width="4" height="6" fill="#fff" stroke="#000"/>
<rect x="589" y="264" width="1" height="52" fill="#000"/>
<rect x="587.5" y="282.5" width="4" height="29" fill="#fff" stroke="#000"/>
<rect x="597" y="271" width="1" height="59" fill="#000"/>
<rect x="595" y="297" width="5" height="25" fill="#000"/>
<rect x="605" y="293" width="1" height="44" fill="#000"/>
<rect x="603" y="322" width="5" height="2" fill="#000"/>
<rect x="613" y="279" width="1" height="49" fill="#000"/>
<rect x="611.5" y="291.5" width="4" height="32" fill="#fff" stroke="#000"/>
<rect x="621" y="259" width="1" height="52" fill="#000"/>
<rect x="619.5" y="281.5" width="4" height="11" fill="#fff" stroke="#000"/>
<rect x="629" y="255" width="1" height="46" fill="#000"/>
<rect x="627" y="281" width="5" height="15" fill="#000"/>
<rect x="637" y="280" width="1" height="66" fill="#000"/>
<rect x="635" y="290" width="5" height="43" fill="#000"/>
<rect x="645" y="329" width="1" height="32" fill="#000"/>
<rect x="643" y="333" width="5" height="17" fill="#000"/>
<rect x="653" y="339" width="1" height="37" fill="#000"/>
<rect x="651" y="349" width="5" height="2" fill="#000"/>
<rect x="661" y="293" width="1" height="63" fill="#000"/>
<rect x="659.5" y="345.5" width="4" height="3" fill="#fff" stroke="#000"/>
<rect x="669" y="330" width="1" height="36" fill="#000"/>
<rect x="667.5" y="330.5" width="4" height="15" fill="#fff" stroke="#000"/>
<rect x="677" y="321" width="1" height="36" fill="#000"/>
<rect x="675" y="336" width="5" height="4" fill="#000"/>
<rect x="685" y="331" width="1" height="58" fill="#000"/>
<rect x="683" y="340" width="5" height="24" fill="#000"/>
<rect x="693" y="329" width="1" height="81" fill="#000"/>
<rect x="691" y="363" width="5" height="35" fill="#000"/>
<rect x="701" y="377" width="1" height="50" fill="#000"/>
<rect x="699" y="397" width="5" height="14" fill="#000"/>
<rect x="709" y="402" width="1" height="27" fill="#000"/>
<rect x="707" y="411" width="5" height="14" fill="#000"/>
<rect x="717" y="395" width="1" height="39" fill="#000"/>
<rect x="715.5" y="418.5" width="4" height="10" fill="#fff" stroke="#000"/>
<rect x="725" y="386" width="1" height="39" fill="#000"/>
<rect x="723.5" y="398.5" width="4" height="18" fill="#fff" stroke="#000"/>
<rect x="733" y="360" width="1" height="50" fill="#000"/>
<rect x="731.5" y="372.5" width="4" height="24" fill="#fff" stroke="#000"/>
<rect x="741" y="332" width="1" height="53" fill="#000"/>
<rect x="739.5" y="357.5" width="4" height="13" fill="#fff" stroke="#000"/>
<rect x="749" y="330" width="1" height="30" fill="#000"/>
<rect x="747.5" y="337.5" width="4" height="18" fill="#fff" stroke="#000"/>
<rect x="757" y="328" width="1" height="9" fill="#000"/>
<rect x="755" y="328" width="5" height="1" fill="#000"/>
<rect x="765" y="312" width="1" height="41" fill="#000"/>
<rect x="763.5" y="326.5" width="4" height="1" fill="#fff" stroke="#000"/>
<rect x="773" y="318" width="1" height="33" fill="#000"/>
<rect x="771" y="325" width="5" height="17" fill="#000"/>
<rect x="781" y="323" width="1" height="25" fill="#000"/>
<rect x="779" y="344" width="5" height="2" fill="#000"/>
<rect x="789" y="324" width="1" height="52" fill="#000"/>
<rect x="787" y="344" width="5" height="16" fill="#000"/>
<rect x="797" y="356" width="1" height="32" fill="#000"/>
<rect x="795" y="360" width="5" height="11" fill="#000"/>
<rect x="805" y="345" width="1" height="35" fill="#000"/>
<rect x="803.5" y="356.5" width="4" height="22" fill="#fff" stroke="#000"/>
<rect x="813" y="271" width="1" height="87" fill="#000"/>
<rect x="811.5" y="278.5" width="4" height="76" fill="#fff" stroke="#000"/>
<rect x="821" y="245" width="1" height="45" fill="#000"/>
<rect x="819.5" y="251.5" width="4" height="27" fill="#fff" stroke="#000"/>
<rect x="829" y="235" width="1" height="37" fill="#000"/>
<rect x="827" y="251" width="5" height="5" fill="#000"/>
<rect x="837" y="254" width="1" height="40" fill="#000"/>
<rect x="835" y="256" width="5" height="30" fill="#000"/>
<rect x="845" y="278" width="1" height="27" fill="#000"/>
<rect x="843.5" y="287.5" width="4" height="4" fill="#fff" stroke="#000"/>
<rect x="853" y="275" width="1" height="51" fill="#000"/>
<rect x="851" y="286" width="5" height="2" fill="#000"/>
<rect x="861" y="236" width="1" height="55" fill="#000"/>
<rect x="859.5" y="250.5" width="4" height="39" fill="#fff" stroke="#000"/>
<rect x="869" y="222" width="1" height="34" fill="#000"/>
<rect x="867" y="250" width="5" height="2" fill="#000"/>
<rect x="877" y="245" width="1" height="16" fill="#000"/>
<rect x="875" y="251" width="5" height="2" fill="#000"/>
<rect x="885" y="236" width="1" height="22" fill="#000"/>
<rect x="883.5" y="252.5" width="4" height="5" fill="#fff" stroke="#000"/>
<rect x="893" y="225" width="1" height="29" fill="#000"/>
<rect x="891.5" y="234.5" width="4" height="17" fill="#fff" stroke="#000"/>
<rect x="901" y="228" width="1" height="41" fill="#000"/>
<rect x="899" y="235" width="5" height="23" fill="#000"/>
<rect x="909" y="242" width="1" height="25" fill="#000"/>
<rect x="907.5" y="246.5" width="4" height="11" fill="#fff" stroke="#000"/>
<rect x="917" y="230" width="1" height="22" fill="#000"/>
<rect x="915" y="246" width="5" height="2" fill="#000"/>
<rect x="925" y="214" width="1" height="46" fill="#000"/>
<rect x="923.5" y="243.5" width="4" height="2" fill="#fff" stroke="#000"/>
<rect x="933" y="220" width="1" height="32" fill="#000"/>
<rect x="931.5" y="231.5" width="4" height="12" fill="#fff" stroke="#000"/>
<rect x="941" y="190" width="1" height="54" fill="#000"/>
<rect x="939.5" y="206.5" width="4" height="25" fill="#fff" stroke="#000"/>
<rect x="949" y="180" width="1" height="28" fill="#000"/>
<rect x="947.5" y="196.5" width="4" height="9" fill="#fff" stroke="#000"/>
<rect x="957" y="192" width="1" height="43" fill="#000"/>
<rect x="955" y="196" width="5" height="14" fill="#000"/>
<rect x="965" y="200" width="1" height="18" fill="#000"/>
<rect x="963" y="201" width="5" height="9" fill="#000"/>
<rect x="973" y="137" width="1" height="73" fill="#000"/>
<rect x="971.5" y="149.5" width="4" height="60" fill="#fff" stroke="#000"/>
<rect x="981" y="142" width="1" height="20" fill="#000"/>
<rect x="979" y="150" width="5" height="12" fill="#000"/>
<rect x="989" y="149" width="1" height="29" fill="#000"/>
<rect x="987" y="161" width="5" height="13" fill="#000"/>
<rect x="997" y="169" width="1" height="61" fill="#000"/>
<rect x="995" y="174" width="5" height="48" fill="#000"/>
<rect x="1005" y="189" width="1" height="37" fill="#000"/>
<rect x="1003.5" y="209.5" width="4" height="15" fill="#fff" stroke="#000"/>
<rect x="1013" y="200" width="1" height="36" fill="#000"/>
<rect x="1011" y="209" width="5" height="25" fill="#000"/>
<rect x="1021" y="205" width="1" height="69" fill="#000"/>
<rect x="1019" y="233" width="5" height="33" fill="#000"/>
<rect x="1029" y="242" width="1" height="44" fill="#000"/>
<rect x="1027.5" y="253.5" width="4" height="11" fill="#fff" stroke="#000"/>
<rect x="1037" y="224" width="1" height="32" fill="#000"/>
<rect x="1035.5" y="241.5" width="4" height="11" fill="#fff" stroke="#000"/>
<path d="M1061.5 289.5 L1069 296.5 L1065.5 296.5 L1065.5 307.5 L1057.5 307.5 L1057.5 296.5 L1054 296.5 Z" fill="#fff" stroke="#ff0000" stroke-width="1"/>
<path d="M1049 109.5 L1059 109.5 L1054 115 Z" fill="#8a8f98"/>
<rect x="12" y="109" width="1" height="567" fill="#000"/>
<rect x="12" y="109" width="1306" height="1" fill="#000"/>
<rect x="1317" y="109" width="1" height="567" fill="#000"/>
<rect x="12" y="675" width="1306" height="1" fill="#000"/>
<rect x="1318" y="111" width="3" height="1" fill="#000"/>
<rect x="1318" y="144" width="3" height="1" fill="#000"/>
<rect x="1318" y="177" width="3" height="1" fill="#000"/>
<rect x="1318" y="210" width="3" height="1" fill="#000"/>
<rect x="1318" y="243" width="3" height="1" fill="#000"/>
<rect x="1318" y="276" width="3" height="1" fill="#000"/>
<rect x="1318" y="309" width="3" height="1" fill="#000"/>
<rect x="1318" y="342" width="3" height="1" fill="#000"/>
<rect x="1318" y="375" width="3" height="1" fill="#000"/>
<rect x="1318" y="408" width="3" height="1" fill="#000"/>
<rect x="1318" y="441" width="3" height="1" fill="#000"/>
<rect x="1318" y="474" width="3" height="1" fill="#000"/>
<rect x="1318" y="507" width="3" height="1" fill="#000"/>
<rect x="1318" y="540" width="3" height="1" fill="#000"/>
<rect x="1318" y="573" width="3" height="1" fill="#000"/>
<rect x="1318" y="606" width="3" height="1" fill="#000"/>
<rect x="1318" y="639" width="3" height="1" fill="#000"/>
<rect x="1318" y="672" width="3" height="1" fill="#000"/>
<text x="1323" y="113.7" font-family="Liberation Sans, sans-serif" font-size="9.3" textLength="32.5" lengthAdjust="spacingAndGlyphs" fill="#000">1.70425</text>
<text x="1323" y="146.7" font-family="Liberation Sans, sans-serif" font-size="9.3" textLength="32.5" lengthAdjust="spacingAndGlyphs" fill="#000">1.69825</text>
<text x="1323" y="179.7" font-family="Liberation Sans, sans-serif" font-size="9.3" textLength="32.5" lengthAdjust="spacingAndGlyphs" fill="#000">1.69240</text>
<text x="1323" y="212.7" font-family="Liberation Sans, sans-serif" font-size="9.3" textLength="32.5" lengthAdjust="spacingAndGlyphs" fill="#000">1.68655</text>
<text x="1323" y="278.7" font-family="Liberation Sans, sans-serif" font-size="9.3" textLength="32.5" lengthAdjust="spacingAndGlyphs" fill="#000">1.67470</text>
<text x="1323" y="311.7" font-family="Liberation Sans, sans-serif" font-size="9.3" textLength="32.5" lengthAdjust="spacingAndGlyphs" fill="#000">1.66885</text>
<text x="1323" y="344.7" font-family="Liberation Sans, sans-serif" font-size="9.3" textLength="32.5" lengthAdjust="spacingAndGlyphs" fill="#000">1.66300</text>
<text x="1323" y="377.7" font-family="Liberation Sans, sans-serif" font-size="9.3" textLength="32.5" lengthAdjust="spacingAndGlyphs" fill="#000">1.65700</text>
<text x="1323" y="410.7" font-family="Liberation Sans, sans-serif" font-size="9.3" textLength="32.5" lengthAdjust="spacingAndGlyphs" fill="#000">1.65115</text>
<text x="1323" y="443.7" font-family="Liberation Sans, sans-serif" font-size="9.3" textLength="32.5" lengthAdjust="spacingAndGlyphs" fill="#000">1.64530</text>
<text x="1323" y="476.7" font-family="Liberation Sans, sans-serif" font-size="9.3" textLength="32.5" lengthAdjust="spacingAndGlyphs" fill="#000">1.63945</text>
<text x="1323" y="509.7" font-family="Liberation Sans, sans-serif" font-size="9.3" textLength="32.5" lengthAdjust="spacingAndGlyphs" fill="#000">1.63345</text>
<text x="1323" y="542.7" font-family="Liberation Sans, sans-serif" font-size="9.3" textLength="32.5" lengthAdjust="spacingAndGlyphs" fill="#000">1.62760</text>
<text x="1323" y="575.7" font-family="Liberation Sans, sans-serif" font-size="9.3" textLength="32.5" lengthAdjust="spacingAndGlyphs" fill="#000">1.62175</text>
<text x="1323" y="608.7" font-family="Liberation Sans, sans-serif" font-size="9.3" textLength="32.5" lengthAdjust="spacingAndGlyphs" fill="#000">1.61575</text>
<text x="1323" y="641.7" font-family="Liberation Sans, sans-serif" font-size="9.3" textLength="32.5" lengthAdjust="spacingAndGlyphs" fill="#000">1.60990</text>
<text x="1323" y="674.7" font-family="Liberation Sans, sans-serif" font-size="9.3" textLength="32.5" lengthAdjust="spacingAndGlyphs" fill="#000">1.60405</text>
<rect x="1318" y="236" width="42" height="10" fill="#000"/>
<text x="1323" y="243.8" font-family="Liberation Sans, sans-serif" font-size="9.3" textLength="32.5" lengthAdjust="spacingAndGlyphs" fill="#fff">1.68102</text>
<rect x="1318" y="428" width="42" height="11" fill="#0000cc"/>
<text x="1323" y="436.8" font-family="Liberation Sans, sans-serif" font-size="9.3" textLength="32.5" lengthAdjust="spacingAndGlyphs" fill="#fff">1.64655</text>
<rect x="13" y="676" width="1" height="3" fill="#000"/>
<text x="12.5" y="688" font-family="Liberation Sans, sans-serif" font-size="9.3" fill="#000" textLength="52.5" lengthAdjust="spacingAndGlyphs">18 Nov 2013</text>
<rect x="77" y="676" width="1" height="3" fill="#000"/>
<text x="76.5" y="688" font-family="Liberation Sans, sans-serif" font-size="9.3" fill="#000" textLength="53" lengthAdjust="spacingAndGlyphs">28 Nov 2013</text>
<rect x="141" y="676" width="1" height="3" fill="#000"/>
<text x="140.5" y="688" font-family="Liberation Sans, sans-serif" font-size="9.3" fill="#000" textLength="51.25" lengthAdjust="spacingAndGlyphs">10 Dec 2013</text>
<rect x="205" y="676" width="1" height="3" fill="#000"/>
<text x="204.5" y="688" font-family="Liberation Sans, sans-serif" font-size="9.3" fill="#000" textLength="51" lengthAdjust="spacingAndGlyphs">20 Dec 2013</text>
<rect x="269" y="676" width="1" height="3" fill="#000"/>
<text x="268.5" y="688" font-family="Liberation Sans, sans-serif" font-size="9.3" fill="#000" textLength="44.5" lengthAdjust="spacingAndGlyphs">3 Jan 2014</text>
<rect x="333" y="676" width="1" height="3" fill="#000"/>
<text x="332.5" y="688" font-family="Liberation Sans, sans-serif" font-size="9.3" fill="#000" textLength="48.75" lengthAdjust="spacingAndGlyphs">15 Jan 2014</text>
<rect x="397" y="676" width="1" height="3" fill="#000"/>
<text x="396.5" y="688" font-family="Liberation Sans, sans-serif" font-size="9.3" fill="#000" textLength="49.25" lengthAdjust="spacingAndGlyphs">27 Jan 2014</text>
<rect x="461" y="676" width="1" height="3" fill="#000"/>
<text x="460.5" y="688" font-family="Liberation Sans, sans-serif" font-size="9.3" fill="#000" textLength="46.75" lengthAdjust="spacingAndGlyphs">6 Feb 2014</text>
<rect x="525" y="676" width="1" height="3" fill="#000"/>
<text x="524.5" y="688" font-family="Liberation Sans, sans-serif" font-size="9.3" fill="#000" textLength="50.5" lengthAdjust="spacingAndGlyphs">18 Feb 2014</text>
<rect x="589" y="676" width="1" height="3" fill="#000"/>
<text x="588.5" y="688" font-family="Liberation Sans, sans-serif" font-size="9.3" fill="#000" textLength="51" lengthAdjust="spacingAndGlyphs">28 Feb 2014</text>
<rect x="653" y="676" width="1" height="3" fill="#000"/>
<text x="652.5" y="688" font-family="Liberation Sans, sans-serif" font-size="9.3" fill="#000" textLength="51.5" lengthAdjust="spacingAndGlyphs">12 Mar 2014</text>
<rect x="717" y="676" width="1" height="3" fill="#000"/>
<text x="716.5" y="688" font-family="Liberation Sans, sans-serif" font-size="9.3" fill="#000" textLength="51.25" lengthAdjust="spacingAndGlyphs">24 Mar 2014</text>
<rect x="781" y="676" width="1" height="3" fill="#000"/>
<text x="780.5" y="688" font-family="Liberation Sans, sans-serif" font-size="9.3" fill="#000" textLength="45" lengthAdjust="spacingAndGlyphs">2 Apr 2014</text>
<rect x="845" y="676" width="1" height="3" fill="#000"/>
<text x="844.5" y="688" font-family="Liberation Sans, sans-serif" font-size="9.3" fill="#000" textLength="49.75" lengthAdjust="spacingAndGlyphs">14 Apr 2014</text>
<rect x="909" y="676" width="1" height="3" fill="#000"/>
<text x="908.5" y="688" font-family="Liberation Sans, sans-serif" font-size="9.3" fill="#000" textLength="50" lengthAdjust="spacingAndGlyphs">24 Apr 2014</text>
<rect x="973" y="676" width="1" height="3" fill="#000"/>
<text x="972.5" y="688" font-family="Liberation Sans, sans-serif" font-size="9.3" fill="#000" textLength="46.5" lengthAdjust="spacingAndGlyphs">6 May 2014</text>
<rect x="1037" y="676" width="1" height="3" fill="#000"/>
<text x="1036.5" y="688" font-family="Liberation Sans, sans-serif" font-size="9.3" fill="#000" textLength="51.5" lengthAdjust="spacingAndGlyphs">16 May 2014</text>
<path d="M16.5 116 L23.5 116 L20 120 Z" fill="#000"/>
<rect x="27" y="113" width="213" height="11" fill="#fff"/>
<text x="28" y="121" font-family="Liberation Sans, sans-serif" font-size="9.3" textLength="62.5" lengthAdjust="spacingAndGlyphs" fill="#000">GBPUSD,Daily</text>
<text x="98.5" y="121" font-family="Liberation Sans, sans-serif" font-size="9.3" textLength="140" lengthAdjust="spacingAndGlyphs" fill="#000">1.67878 1.68404 1.67834 1.68102</text>
<rect x="13" y="166" width="88.5" height="10" fill="#fff"/>
<text x="19.5" y="174" font-family="Liberation Sans, sans-serif" font-size="9.3" textLength="81" lengthAdjust="spacingAndGlyphs" fill="#000">#1820817 buy 0.20</text>
<rect x="13" y="235" width="86.0" height="10" fill="#fff"/>
<text x="19.5" y="243" font-family="Liberation Sans, sans-serif" font-size="9.3" textLength="78.5" lengthAdjust="spacingAndGlyphs" fill="#000">#1880201 sell 0.20</text>
<rect x="13" y="248" width="60.0" height="10" fill="#fff"/>
<text x="19.5" y="256" font-family="Liberation Sans, sans-serif" font-size="9.3" textLength="52.5" lengthAdjust="spacingAndGlyphs" fill="#000">#1880201 tp</text>
<rect x="13" y="279" width="86.0" height="10" fill="#fff"/>
<text x="19.5" y="287" font-family="Liberation Sans, sans-serif" font-size="9.3" textLength="78.5" lengthAdjust="spacingAndGlyphs" fill="#000">#1642049 sell 0.20</text>
<rect x="13" y="285.5" width="60.0" height="10" fill="#fff"/>
<text x="19.5" y="293.5" font-family="Liberation Sans, sans-serif" font-size="9.3" textLength="52.5" lengthAdjust="spacingAndGlyphs" fill="#000">#1642049 tp</text>
<rect x="13" y="376" width="86.0" height="10" fill="#fff"/>
<text x="19.5" y="384" font-family="Liberation Sans, sans-serif" font-size="9.3" textLength="78.5" lengthAdjust="spacingAndGlyphs" fill="#000">#1487067 sell 0.20</text>
<rect x="13" y="449" width="86.0" height="10" fill="#fff"/>
<text x="19.5" y="457" font-family="Liberation Sans, sans-serif" font-size="9.3" textLength="78.5" lengthAdjust="spacingAndGlyphs" fill="#000">#1194073 sell 0.20</text>
<rect x="13" y="459.5" width="86.0" height="10" fill="#fff"/>
<text x="19.5" y="467.5" font-family="Liberation Sans, sans-serif" font-size="9.3" textLength="78.5" lengthAdjust="spacingAndGlyphs" fill="#000">#1192378 sell 0.20</text>
</svg>
  <div class="hline" style="left:0;top:664px;width:1354px;background:#000"></div>
  <div id="tabs">
   <div class="abs" style="left:0;top:1px;width:1354px;height:2px;background:#fff"></div>
<div class="abs" style="left:0;top:1px;width:2px;height:17px;background:#808080"></div>
<div class="abs" style="left:92px;top:0px;width:88px;height:19px;background:#fff;border:1px solid #000;border-top:none;box-sizing:border-box;border-right-width:2px;border-bottom-width:1.5px"></div>
<span class="tbtxt" style="left:13.00px;top:2.19px;font-size:11px;line-height:14px;color:#7a7a7a;letter-spacing:-0.580px;">EURUSD,Daily</span>
<span class="tbtxt" style="left:102.00px;top:2.19px;font-size:11px;line-height:14px;color:#000;letter-spacing:-0.622px;">GBPUSD,Daily</span>
<span class="tbtxt" style="left:190.47px;top:2.19px;font-size:11px;line-height:14px;color:#7a7a7a;letter-spacing:-0.493px;">USDJPY,H4</span>
<i style="left:256px"></i>
<span class="tbtxt" style="left:266.97px;top:2.19px;font-size:11px;line-height:14px;color:#7a7a7a;letter-spacing:-0.493px;">EURJPY,H4</span>
<i style="left:332px"></i>
<span class="tbtxt" style="left:343.75px;top:2.19px;font-size:11px;line-height:14px;color:#7a7a7a;letter-spacing:-0.514px;">GBPCHF,H1</span>
<i style="left:412px"></i>
<span class="tbtxt" style="left:422.90px;top:2.19px;font-size:11px;line-height:14px;color:#7a7a7a;letter-spacing:-0.530px;">AUDUSD,H4</span>
<i style="left:492px"></i>
<span class="tbtxt" style="left:503.19px;top:2.19px;font-size:11px;line-height:14px;color:#7a7a7a;letter-spacing:-0.525px;">NZDUSD,H4</span>
<i style="left:572px"></i>
<span class="tbtxt" style="left:583.18px;top:2.19px;font-size:11px;line-height:14px;color:#7a7a7a;letter-spacing:-0.525px;">XAUUSD,H4</span>
<i style="left:652px"></i>
<span class="tbtxt" style="left:662.94px;top:2.19px;font-size:11px;line-height:14px;color:#7a7a7a;letter-spacing:-0.451px;">EURCHF,Daily</span>
<i style="left:740px"></i>
<span class="tbtxt" style="left:751.55px;top:2.19px;font-size:11px;line-height:14px;color:#7a7a7a;letter-spacing:-0.518px;">EURGBP,H4</span>
<i style="left:820px"></i>
<span class="tbtxt" style="left:830.96px;top:2.19px;font-size:11px;line-height:14px;color:#7a7a7a;letter-spacing:-0.493px;">GBPJPY,H4</span>
<i style="left:896px"></i>
<span class="tbtxt" style="left:907.19px;top:2.19px;font-size:11px;line-height:14px;color:#7a7a7a;letter-spacing:-0.525px;">AUDNZD,H4</span>
<i style="left:976px"></i>
<span class="tbtxt" style="left:986.90px;top:2.19px;font-size:11px;line-height:14px;color:#7a7a7a;letter-spacing:-0.530px;">USDCAD,H4</span>
<i style="left:1056px"></i>
<span class="tbtxt" style="left:1067.75px;top:2.19px;font-size:11px;line-height:14px;color:#7a7a7a;letter-spacing:-0.514px;">USDCHF,H4</span>
<i style="left:1136px"></i>
<svg style="left:1326px;top:5px" width="5" height="8" viewBox="0 0 5 8" ><path d="M4.5 0 v8 l-4.5 -4 z" fill="#8c8c8c"/></svg>
<svg style="left:1343px;top:5px" width="5" height="8" viewBox="0 0 5 8" ><path d="M0.5 0 v8 l4.5 -4 z" fill="#8c8c8c"/></svg>
  </div>
  <div id="status">
   <span class="tbtxt" style="left:2.00px;top:4.84px;font-size:12px;line-height:15px;color:#000;letter-spacing:-0.281px;">Для справки, нажмите F1</span>
<span class="tbtxt" style="left:634.00px;top:4.84px;font-size:12px;line-height:15px;color:#000;letter-spacing:-0.003px;">Default</span>
<i style="left:627px"></i>
<i style="left:744px"></i>
<i style="left:846px"></i>
<i style="left:917px"></i>
<i style="left:988px"></i>
<i style="left:1056px"></i>
<i style="left:1126px"></i>
<i style="left:1192px"></i>
<svg style="left:1198px;top:5px" width="24" height="13" viewBox="0 0 24 13" shape-rendering="crispEdges"><rect x="0" y="0" width="2" height="11" fill="#5b7f10"/><rect x="0" y="12" width="2" height="1" fill="#a01010"/><rect x="3" y="0" width="2" height="10" fill="#5b7f10"/><rect x="3" y="11" width="2" height="2" fill="#a01010"/><rect x="6" y="0" width="2" height="9" fill="#5b7f10"/><rect x="6" y="10" width="2" height="3" fill="#a01010"/><rect x="9" y="0" width="2" height="8" fill="#5b7f10"/><rect x="9" y="9" width="2" height="4" fill="#a01010"/><rect x="12" y="0" width="2" height="7" fill="#5b7f10"/><rect x="12" y="8" width="2" height="5" fill="#a01010"/><rect x="15" y="0" width="2" height="6" fill="#5b7f10"/><rect x="15" y="7" width="2" height="6" fill="#a01010"/><rect x="18" y="0" width="2" height="5" fill="#5b7f10"/><rect x="18" y="6" width="2" height="7" fill="#a01010"/><rect x="21" y="0" width="2" height="4" fill="#5b7f10"/><rect x="21" y="5" width="2" height="8" fill="#a01010"/></svg>
<span class="tbtxt" style="left:1261.00px;top:4.84px;font-size:12px;line-height:15px;color:#000;letter-spacing:-0.195px;">66/1 kb</span>
<svg style="left:1341px;top:8px" width="13" height="13" viewBox="0 0 13 13" ><path d="M12 1 L1 12 M12 5 L5 12 M12 9 L9 12" stroke="#b4b4b4" stroke-width="1.3"/></svg>
  </div>
 </div>
</div>
<div id="taskbar">
 <div class="abs" style="left:22px;top:3px;width:12px;height:6px;background:#e8e0f0;transform:skewY(-12deg)"></div>
<div class="abs" style="left:52px;top:0;width:58px;height:8px;background:#a682c9;border:1px solid #c3a9dc;border-bottom:none;box-sizing:border-box"></div>
<div class="abs" style="left:70px;top:5px;width:20px;height:20px;border-radius:10px;background:#e8503a"></div>
<div class="abs" style="left:128px;top:2px;width:30px;height:6px;background:#0a8a1a"></div>
<div class="abs" style="left:182px;top:2px;width:26px;height:8px;background:#3f6fb3;transform:skewY(-14deg)"></div>
<div class="abs" style="left:237px;top:0;width:58px;height:8px;background:#a682c9;border:1px solid #c3a9dc;border-bottom:none;box-sizing:border-box"></div>
<div class="abs" style="left:255px;top:4px;width:20px;height:20px;border-radius:10px;background:#1aa9f0"></div>
<div class="abs" style="left:300px;top:0;width:58px;height:8px;background:#a682c9;border:1px solid #c3a9dc;border-bottom:none;box-sizing:border-box"></div>
<div class="abs" style="left:315px;top:4px;width:22px;height:20px;border-radius:11px;background:#f59a32"></div>
</div>
</body>
</html>
